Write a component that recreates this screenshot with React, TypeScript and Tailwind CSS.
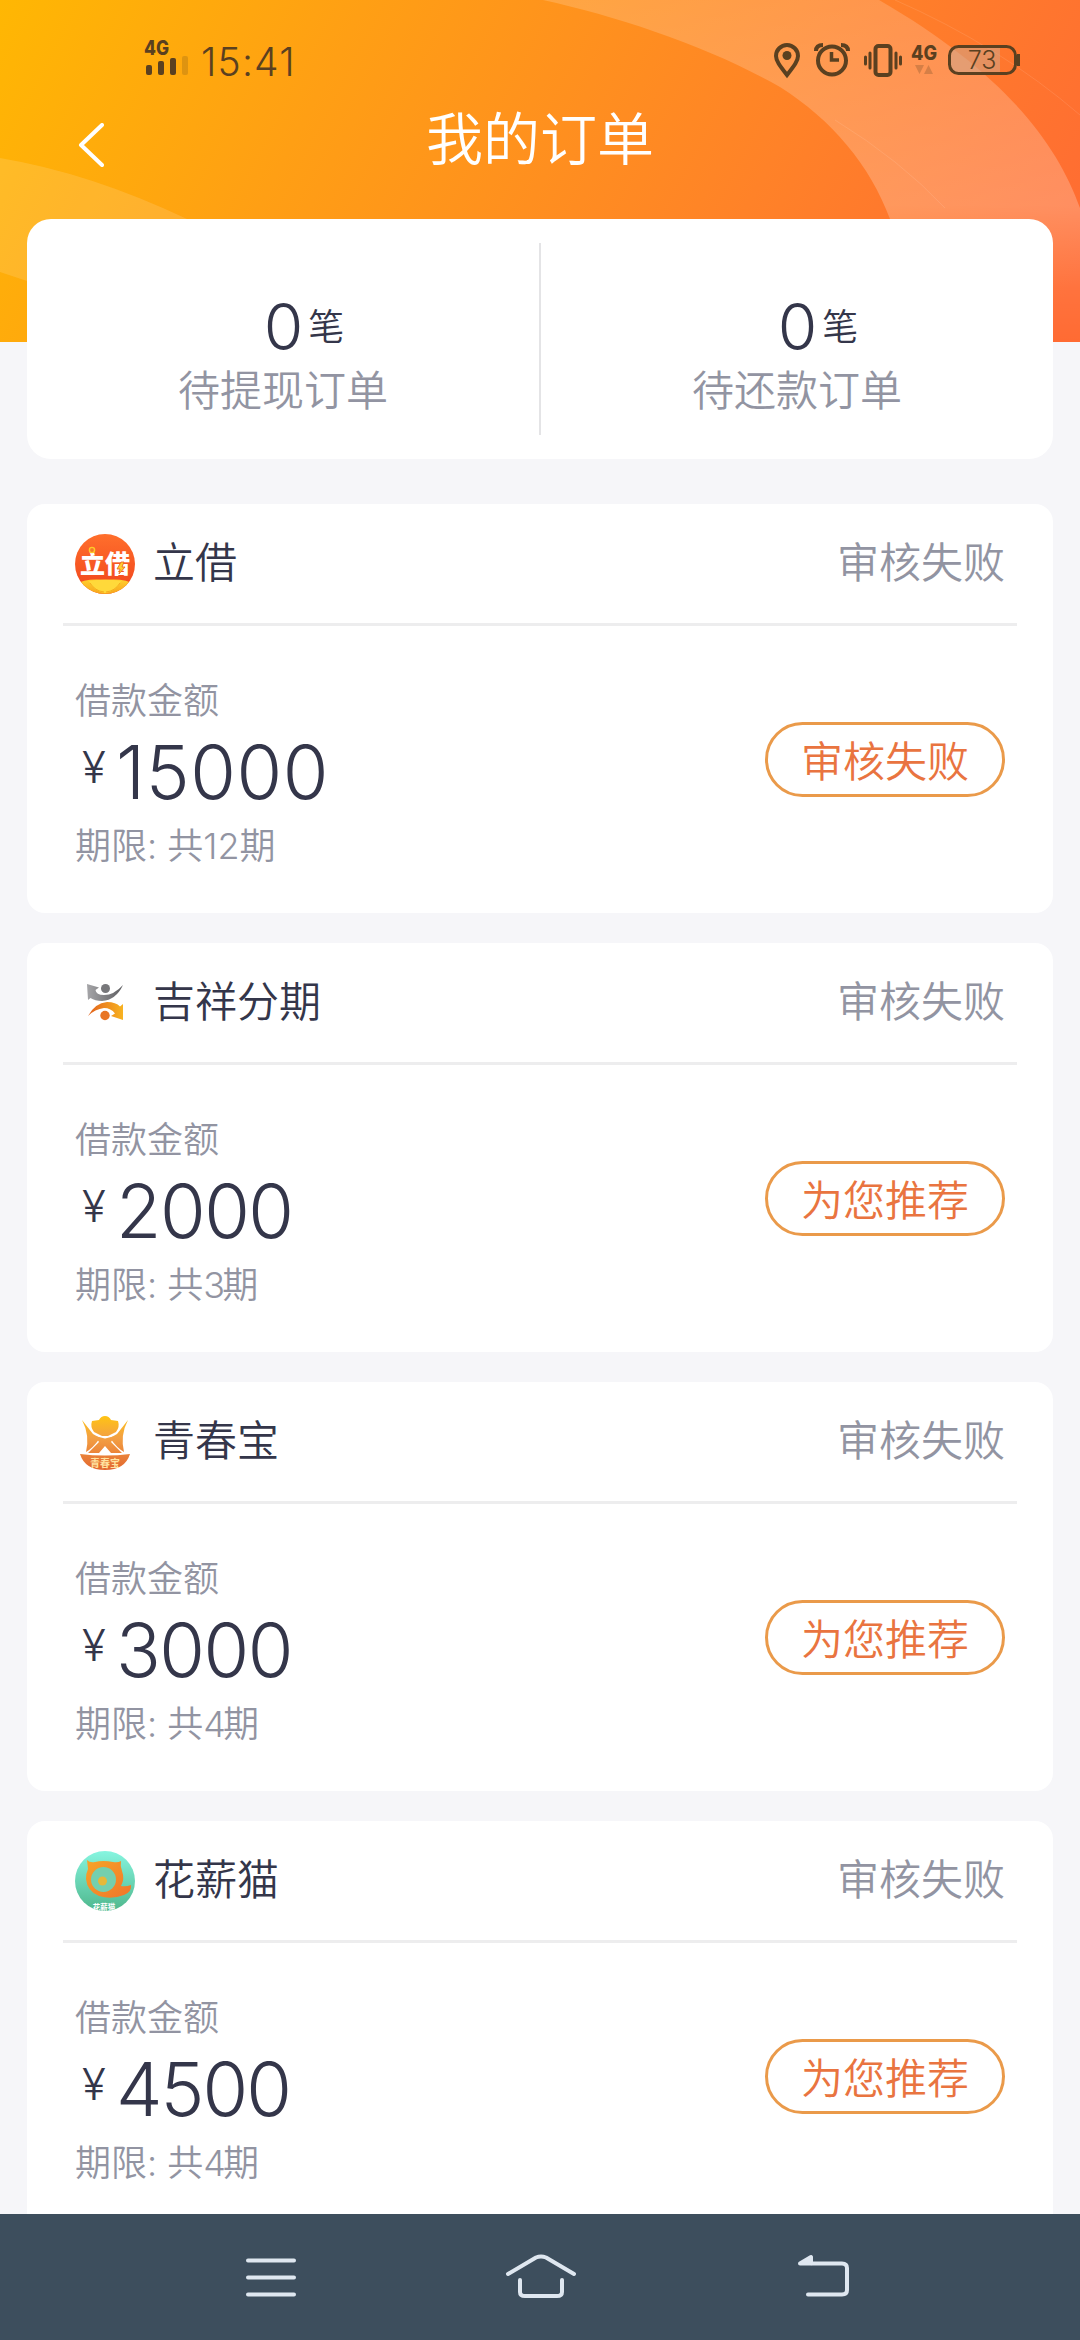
import React from 'react';

type Order = {
    name: string;
    amount: string;
    amountTracking: string;
    periods: number;
    action: string;
    logo: React.ReactNode;
};

const LijieLogo = () => (
    <svg viewBox="0 0 60 60" className="w-full h-full">
        <defs>
            <clipPath id="lijie-clip"><circle cx="30" cy="30" r="30" /></clipPath>
            <linearGradient id="lijie-bg" x1="0" y1="0" x2="0" y2="1">
                <stop offset="0" stopColor="#ff6f2c" />
                <stop offset="1" stopColor="#f0431c" />
            </linearGradient>
            <linearGradient id="lijie-gold" x1="0" y1="0" x2="0" y2="1">
                <stop offset="0" stopColor="#ffcf2e" />
                <stop offset="1" stopColor="#f8a51c" />
            </linearGradient>
        </defs>
        <g clipPath="url(#lijie-clip)">
            <rect width="60" height="60" fill="url(#lijie-bg)" />
            <path d="M0 51 Q10 44 30 46 Q50 44 60 51 V60 H0Z" fill="url(#lijie-gold)" />
            <path d="M14 47 Q18 57 30 59 Q42 57 46 47 Q30 44 14 47Z" fill="#ffd93a" />
            <path d="M15 49 Q20 57 29 58 M45 49 Q40 57 31 58" stroke="#f5ac1e" strokeWidth="1" fill="none" />
        </g>
        <text x="30" y="38.5" textAnchor="middle" fontSize="25" fontWeight="900" fill="#fff" fontFamily='"Noto Sans CJK SC", sans-serif'>立借</text>
        <circle cx="17" cy="16" r="2.6" fill="#f47a2a" stroke="#ffc928" strokeWidth="1.4" />
        <path d="M46 28 l-4 7 h3 l-1 5 l6 -7 h-3 l2 -5z" fill="#ffcf2e" stroke="#e8601c" strokeWidth=".8" />
    </svg>
);

const JixiangLogo = () => (
    <svg viewBox="0 0 60 60" className="w-full h-full">
        <defs>
            <linearGradient id="jx-gray" x1="0" y1="0" x2="1" y2="0">
                <stop offset="0" stopColor="#a5a5a8" />
                <stop offset="1" stopColor="#5d5d60" />
            </linearGradient>
            <linearGradient id="jx-orange" x1="0" y1="0" x2="1" y2="0">
                <stop offset="0" stopColor="#e2611c" />
                <stop offset="1" stopColor="#f8b321" />
            </linearGradient>
        </defs>
        <path d="M12 11 L24 14.5 L20.500 17 Q21 22 29 22 Q39 22 48 12 Q41 27 27 28 Q20 28 15.500 25 L13 27Z" fill="url(#jx-gray)" />
        <circle cx="30.500" cy="15.500" r="4.500" fill="#77777a" />
        <path d="M13 43 Q20 30 32 29 Q41 29 45 33.500 L48 31 L48 47 L36 43 L40 40.500 Q36 35 29 35 Q20 36 13 43Z" fill="url(#jx-orange)" />
        <circle cx="30" cy="42.500" r="4.700" fill="#e87524" />
    </svg>
);

const QingchunLogo = () => (
    <svg viewBox="0 0 60 60" className="w-full h-full">
        <defs>
            <linearGradient id="qc" gradientUnits="userSpaceOnUse" x1="0" y1="4" x2="0" y2="58">
                <stop offset="0" stopColor="#ffc414" />
                <stop offset=".4" stopColor="#f3a043" />
                <stop offset="1" stopColor="#e2672f" />
            </linearGradient>
        </defs>
        <g fill="url(#qc)">
            <path d="M17 9 L24 8 Q26 4 30 4 Q34 4 36 8 L43 9 Q45 15 41 20 L33 24 H27 L19 20 Q15 15 17 9Z" />
            <path d="M7 8 L18 22 L25 26 Q18 36 11 40 Q15 23 7 8Z" />
            <path d="M53 8 L42 22 L35 26 Q42 36 49 40 Q45 23 53 8Z" />
            <path d="M20 24 L30 26.500 L40 24 L36 30 L47 41 H36 L30 34 L24 41 H13 L24 30Z" />
            <path d="M5 42 Q30 45 55 42 Q50 58 30 58 Q10 58 5 42Z" />
        </g>
        <text x="30" y="54.500" textAnchor="middle" fontSize="10" fontWeight="700" fill="#ffe3a0" fontFamily='"Noto Sans CJK SC", sans-serif'>青春宝</text>
    </svg>
);

const HuaxinLogo = () => (
    <svg viewBox="0 0 60 60" className="w-full h-full">
        <defs>
            <clipPath id="hx-clip"><circle cx="30" cy="30" r="30" /></clipPath>
            <linearGradient id="hx-bg" x1="0" y1="0" x2="0" y2="1">
                <stop offset="0" stopColor="#86f5e0" />
                <stop offset="1" stopColor="#4fb78c" />
            </linearGradient>
            <linearGradient id="hx-cat" x1="0" y1="0" x2="1" y2="1">
                <stop offset="0" stopColor="#f7a528" />
                <stop offset="1" stopColor="#f0742a" />
            </linearGradient>
        </defs>
        <g clipPath="url(#hx-clip)">
            <rect width="60" height="60" fill="url(#hx-bg)" />
            <path d="M12 9 Q15 12 20 11 Q28 9 38 11 Q43 12 46 10 Q45 15 47 20 Q50 28 46 35 Q51 36 56 34 Q57 41 49 44 Q36 49 24 45 Q12 40 11 28 Q11 22 13 18Z" fill="url(#hx-cat)" />
            <circle cx="28.500" cy="28.500" r="12.500" fill="#74cfae" />
            <circle cx="27.500" cy="30" r="4.500" fill="#e6b83a" />
            <text x="29" y="58.500" textAnchor="middle" fontSize="7.500" fontWeight="700" fill="#fff" fontFamily='"Noto Sans CJK SC", sans-serif'>花薪猫</text>
        </g>
    </svg>
);

const orders: Order[] = [
    { name: '立借', amount: '15000', amountTracking: 'tracking-[0.6px]', periods: 12, action: '审核失败', logo: <LijieLogo /> },
    { name: '吉祥分期', amount: '2000', amountTracking: 'tracking-[-1.5px]', periods: 3, action: '为您推荐', logo: <JixiangLogo /> },
    { name: '青春宝', amount: '3000', amountTracking: 'tracking-[-1.5px]', periods: 4, action: '为您推荐', logo: <QingchunLogo /> },
    { name: '花薪猫', amount: '4500', amountTracking: 'tracking-[-2px]', periods: 4, action: '为您推荐', logo: <HuaxinLogo /> },
];

const summary = [
    { count: 0, label: '待提现订单' },
    { count: 0, label: '待还款订单' },
];

function HeroBackground() {
    return (
        <svg viewBox="0 0 1080 342" className="absolute inset-0 w-full h-full -z-10">
            <defs>
                <linearGradient id="hero" gradientUnits="userSpaceOnUse" x1="0" y1="0" x2="960" y2="500">
                    <stop offset="0" stopColor="#ffb703" />
                    <stop offset=".3" stopColor="#ff9f14" />
                    <stop offset=".7" stopColor="#ff8228" />
                    <stop offset="1" stopColor="#ff6b33" />
                </linearGradient>
                <linearGradient id="band" x1="0" y1="0" x2="0" y2="1">
                    <stop offset="0" stopColor="#fff" stopOpacity=".17" />
                    <stop offset=".6" stopColor="#fff" stopOpacity=".23" />
                    <stop offset=".85" stopColor="#fff" stopOpacity=".05" />
                    <stop offset="1" stopColor="#fff" stopOpacity="0" />
                </linearGradient>
            </defs>
            <rect width="1080" height="342" fill="url(#hero)" />
            <path d="M543 0 C620 17 710 47 780 87 C832 120 870 165 890 219 V342 H1080 V208 C1056 140 1000 70 879 0Z" fill="url(#band)" />
            <path d="M0 158 Q90 173 187 219 L27 281 L0 272Z" fill="#fff" opacity=".13" />
            <path d="M895 0 Q1000 46 1080 115 M835 120 Q900 160 945 208" fill="none" stroke="#fff" opacity=".1" />
        </svg>
    );
}

function StatusBar() {
    return (
        <div className="flex justify-between h-[90px] pl-[144px] pr-[59px] text-[#5a4020]">
            <div className="flex">
                <svg viewBox="0 0 48 90" className="w-12 h-[90px]">
                    <text x="0" y="55" fontSize="20" fontWeight="800" textLength="25" lengthAdjust="spacingAndGlyphs" fill="currentColor" fontFamily="Inter, sans-serif">4G</text>
                    <rect x="2" y="65" width="6" height="10" rx="2" fill="currentColor" />
                    <rect x="14" y="61" width="6" height="14" rx="2" fill="currentColor" />
                    <rect x="26" y="58" width="6" height="17" rx="2" fill="currentColor" />
                    <rect x="38" y="56" width="6" height="19" rx="2" fill="currentColor" opacity=".2" />
                </svg>
                <span className="mt-[40px] ml-[9px] text-[39px] leading-[44px] tracking-[1.2px]">15:41</span>
            </div>
            <svg viewBox="750 0 271 90" className="w-[271px] h-[90px]" fill="none" stroke="currentColor">
                <path d="M787 75 C780 66 776 61 776 56 A11 11 0 0 1 798 56 C798 61 794 66 787 75Z" strokeWidth="4" />
                <circle cx="787" cy="55.500" r="4.500" fill="currentColor" stroke="none" />
                <circle cx="832" cy="60.500" r="14" strokeWidth="4" />
                <path d="M831.500 52 V60 H839" strokeWidth="3.500" />
                <path d="M816 51 Q816 45 823 45 M848 51 Q848 45 841 45" strokeWidth="4" />
                <rect x="875.500" y="46" width="15" height="29" rx="3" strokeWidth="4" />
                <path d="M870 53 V68 M865.500 57 V64 M896 53 V68 M900.500 57 V64" strokeWidth="3" strokeLinecap="round" />
                <text x="911" y="60" fontSize="20" fontWeight="800" textLength="26" lengthAdjust="spacingAndGlyphs" fill="currentColor" stroke="none" fontFamily="Inter, sans-serif">4G</text>
                <path d="M915 65 H924 L919.500 74Z M924 74 H933 L928.500 65Z" fill="currentColor" stroke="none" opacity=".25" />
                <path d="M958 47 H1000 V73 H958 Q950 73 950 65 V55 Q950 47 958 47Z" fill="#cfa58a" stroke="none" opacity=".55" />
                <rect x="949.500" y="46.500" width="66" height="27" rx="9" strokeWidth="3" />
                <path d="M1018.500 54 V66" strokeWidth="3" />
                <text x="982" y="69" textAnchor="middle" fontSize="25" fill="currentColor" stroke="none" fontFamily="Inter, sans-serif">73</text>
            </svg>
        </div>
    );
}

function SummaryCard() {
    return (
        <section className="flex items-center h-[240px] mx-[27px] mt-[29px] rounded-[24px] bg-white">
            {summary.map((item, i) => (
                <React.Fragment key={item.label}>
                    {i > 0 && <div className="w-[2px] h-[192px] bg-[#e4e4e6]" />}
                    <div className="flex-1 flex flex-col items-center pt-6">
                        <div className="flex pl-[42px] leading-[80px] text-[#34364a]">
                            <span className="text-[64px]">{item.count}</span>
                            <span className="ml-[5px] text-[36px]">笔</span>
                        </div>
                        <span className="text-[42px] leading-[48px] text-[#9294a2]">{item.label}</span>
                    </div>
                </React.Fragment>
            ))}
        </section>
    );
}

function OrderCard({ order }: { order: Order }) {
    return (
        <article className="h-[409px] shrink-0 mx-[27px] px-9 rounded-[18px] bg-white">
            <header className="flex items-center justify-between h-[122px] border-b-[3px] border-[#ededee] px-3 text-[42px]">
                <div className="flex items-center gap-[18px] text-[#34364a]">
                    <div className="size-[60px]">{order.logo}</div>
                    <h2 className="pb-[2px]">{order.name}</h2>
                </div>
                <span className="pb-[2px] text-[#9294a2]">审核失败</span>
            </header>
            <div className="flex justify-between px-3 pt-[48px]">
                <div className="text-[36px] text-[#9294a2]">
                    <p className="leading-[54px]">借款金额</p>
                    <div className="flex items-start text-[#34364a] h-[88px]">
                        <span className="w-[41px] pl-[7px] pt-[15px] text-[44px] leading-[48px]">¥</span>
                        <span className={`text-[74px] leading-[88px] ${order.amountTracking}`}>{order.amount}</span>
                    </div>
                    <p className="leading-[61px]">
                        期限: 共<span className={order.periods < 10 ? 'tracking-[-3px]' : ''}>{order.periods}</span>期
                    </p>
                </div>
                <button className="mt-[48px] w-[240px] h-[75px] rounded-full border-[3px] border-[#ea9a4a] pt-[4px] text-[42px] leading-[65px] text-[#e97440]">
                    {order.action}
                </button>
            </div>
        </article>
    );
}

function NavBar() {
    return (
        <nav className="flex h-[126px] shrink-0 bg-[#3d4e5d]">
            <svg viewBox="0 0 1080 126" className="w-full h-full" fill="none" stroke="#dfe7f0" strokeWidth="4" strokeLinecap="round" strokeLinejoin="round">
                <path d="M248 46.500 H294 M248 63.500 H294 M248 80.500 H294" />
                <path d="M508 60 L536 43.500 Q541 41.500 546 43.500 L574 60" />
                <path d="M520 66 V78 Q520 82 525 82 H557 Q562 82 562 78 V66" />
                <path d="M808 80.500 H842 Q847 80.500 847 76 V54 Q847 49.500 842 49.500 H812" />
                <path d="M800 49.500 L811 43 V49.500Z" fill="#dfe7f0" />
            </svg>
        </nav>
    );
}

export default function App() {
    return (
        <div className="flex flex-col w-[1080px] h-[2340px] overflow-hidden bg-[#f6f6f9] font-[Inter,'Noto_Sans_CJK_SC',sans-serif] font-[350]">
            <div className="relative isolate h-[342px] shrink-0">
                <HeroBackground />
                <StatusBar />
                <div className="grid grid-cols-[1fr_auto_1fr] items-center h-[100px] text-white">
                    <svg viewBox="0 0 26 44" className="w-[26px] h-[44px] ml-[78px] mt-[10px]" fill="none" stroke="currentColor" strokeWidth="4" strokeLinecap="round" strokeLinejoin="round">
                        <path d="M24 2 L3 22 L24 42" />
                    </svg>
                    <h1 className="text-[57px] leading-[100px]">我的订单</h1>
                </div>
                <SummaryCard />
            </div>
            <main className="flex flex-col gap-[30px] grow min-h-0 overflow-hidden mt-[162px]">
                {orders.map((order) => (
                    <OrderCard key={order.name} order={order} />
                ))}
            </main>
            <NavBar />
        </div>
    );
}
